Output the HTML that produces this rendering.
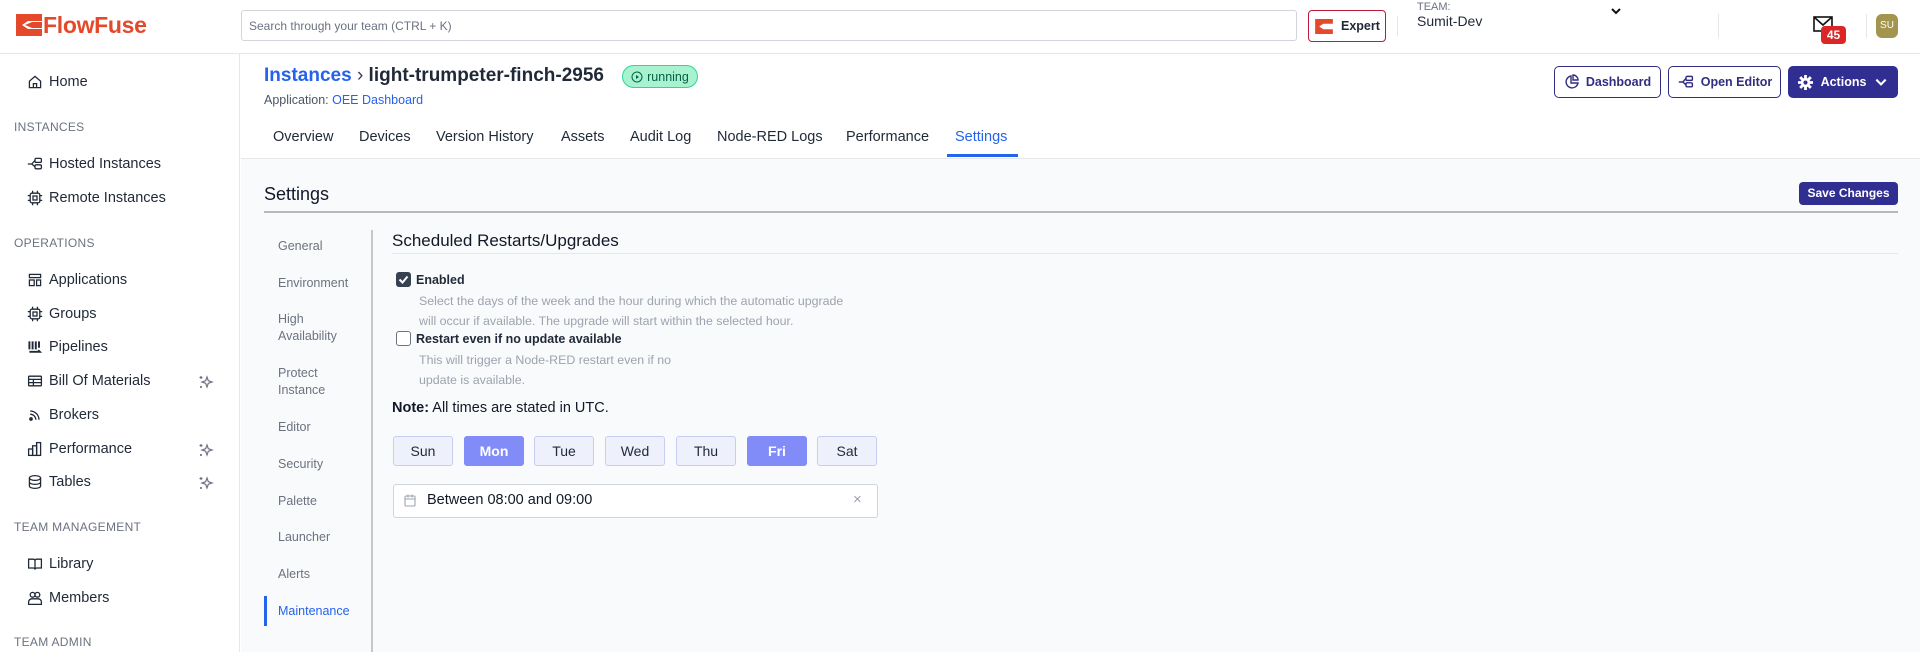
<!DOCTYPE html>
<html><head><meta charset="utf-8">
<style>
*{box-sizing:border-box;margin:0;padding:0}
body{width:1920px;height:652px;overflow:hidden;font-family:"Liberation Sans",sans-serif;background:#fff;color:#1f2937;position:relative}
.a{position:absolute;white-space:nowrap}
.hdr{position:absolute;left:0;top:0;width:1920px;height:54px;border-bottom:1px solid #e5e7eb;background:#fff}
.side{position:absolute;left:0;top:54px;width:240px;height:598px;border-right:1px solid #e5e7eb;background:#fff}
.si{position:absolute;left:27px;font-size:14.5px;color:#1f2937;display:flex;align-items:center}
.si svg{width:16px;height:16px;margin-right:6px;stroke:#1f2937;fill:none;stroke-width:1.6}
.sh{position:absolute;left:14px;font-size:12px;color:#6b7280;letter-spacing:.3px}
.spk{position:absolute;left:198px;width:16px;height:16px;stroke:#6b7280;fill:none;stroke-width:1.2}
.main{position:absolute;left:241px;top:158px;width:1679px;height:494px;background:#f9fafb;border-top:1px solid #e5e7eb}
.tab{position:absolute;top:129px;font-size:14.5px;color:#1f2937}
.btn{position:absolute;top:66px;height:32px;border:1.5px solid #312e81;border-radius:5px;font-size:12.5px;font-weight:bold;color:#312e81;display:flex;align-items:center;justify-content:center;gap:6px;background:#fff}
.nav{position:absolute;left:278px;font-size:12.5px;color:#6b7280;line-height:17px}
.day{position:absolute;top:436px;width:60px;height:30px;border:1px solid #c7cdf0;background:#eef0fc;border-radius:3px;font-size:14px;color:#1f2937;display:flex;align-items:center;justify-content:center}
.day.on{background:#818cf8;border-color:#818cf8;color:#fff;font-weight:bold}
.desc{position:absolute;left:419px;font-size:12.4px;color:#9ca3af;line-height:20px}
</style></head><body>
<div class="hdr"></div>
<svg class="a" style="left:16px;top:14px" width="26" height="22" viewBox="0 0 26 22"><path d="M0 0H26V7H12L6 11 12 15H26V22H0Z" fill="#e5492b"/><path d="M9 11 16 8H26V14H16Z" fill="#e5492b"/></svg>
<div class="a" style="left:43px;top:12px;font-size:23px;font-weight:bold;color:#e5492b;letter-spacing:-.3px">FlowFuse</div>
<div class="a" style="left:241px;top:10px;width:1056px;height:31px;border:1px solid #d1d5db;border-radius:3px;font-size:12px;color:#6b7280;padding:8px 7px">Search through your team (CTRL + K)</div>
<div class="a" style="left:1308px;top:10px;width:78px;height:32px;border:1.5px solid #b91c3c;border-radius:4px;display:flex;align-items:center;padding-left:6px;gap:8px;font-size:12.5px;font-weight:bold;color:#1f2937"><svg width="18" height="15" viewBox="0 0 26 22"><path d="M0 0H26V7H12L6 11 12 15H26V22H0Z" fill="#e5492b"/></svg>Expert</div>
<div class="a" style="left:1397px;top:16px;width:1px;height:20px;background:#e5e7eb"></div>
<div class="a" style="left:1417px;top:1px;font-size:11px;color:#6b7280">TEAM:</div>
<div class="a" style="left:1417px;top:13px;font-size:14px;color:#1f2937">Sumit-Dev</div>
<svg class="a" style="left:1610px;top:6px" width="12" height="10" viewBox="0 0 12 10"><path d="M2 3l4 4 4-4" stroke="#111" stroke-width="2" fill="none"/></svg>
<div class="a" style="left:1718px;top:14px;width:1px;height:24px;background:#e5e7eb"></div>
<svg class="a" style="left:1813px;top:16px" width="20" height="16" viewBox="0 0 20 16"><rect x="1" y="1" width="18" height="14" stroke="#111" stroke-width="1.6" fill="none"/><path d="M1 1l9 8 9-8" stroke="#111" stroke-width="1.6" fill="none"/></svg>
<div class="a" style="left:1821px;top:26px;width:25px;height:18px;background:#dc2626;border-radius:4px;color:#fff;font-size:12px;font-weight:bold;text-align:center;line-height:18px">45</div>
<div class="a" style="left:1866px;top:14px;width:1px;height:24px;background:#e5e7eb"></div>
<div class="a" style="left:1876px;top:14px;width:22px;height:24px;background:#a39550;border-radius:6px;color:#fff;font-size:10px;text-align:center;line-height:24px">SU</div>

<div class="side">
<div class="si" style="top:20px"><svg viewBox="0 0 20 20"><path d="M3 9l7-6 7 6v8H3z M8 17v-5h4v5"/></svg>Home</div>
<div class="sh" style="top:66px">INSTANCES</div>
<div class="si" style="top:102px"><svg viewBox="0 0 20 20"><rect x="10" y="3" width="8" height="5" rx="1.5"/><rect x="10" y="11" width="8" height="5" rx="1.5"/><path d="M1 10h5M6 10l4-4.5M6 10l4 3.5"/></svg>Hosted Instances</div>
<div class="si" style="top:136px"><svg viewBox="0 0 20 20"><rect x="4" y="4" width="12" height="12" rx="2"/><rect x="7.5" y="7.5" width="5" height="5"/><path d="M7 1v3M13 1v3M7 16v3M13 16v3M1 7h3M1 13h3M16 7h3M16 13h3"/></svg>Remote Instances</div>
<div class="sh" style="top:182px">OPERATIONS</div>
<div class="si" style="top:218px"><svg viewBox="0 0 20 20"><rect x="3" y="3" width="14" height="4"/><rect x="3" y="10" width="6" height="7"/><rect x="12" y="10" width="5" height="7"/></svg>Applications</div>
<div class="si" style="top:252px"><svg viewBox="0 0 20 20"><rect x="4" y="4" width="12" height="12" rx="2"/><rect x="7.5" y="7.5" width="5" height="5"/><path d="M7 1v3M13 1v3M7 16v3M13 16v3M1 7h3M1 13h3M16 7h3M16 13h3"/></svg>Groups</div>
<div class="si" style="top:285px"><svg viewBox="0 0 20 20" style="stroke-width:2.4"><path d="M3 3v10M7 3v10M11 3v10M15 3v8M3 16h13l-2-2"/></svg>Pipelines</div>
<div class="si" style="top:319px"><svg viewBox="0 0 20 20"><rect x="2" y="4" width="16" height="12" rx="1"/><path d="M2 8h16M2 12h16M8 8v8"/></svg>Bill Of Materials</div>
<div class="si" style="top:353px"><svg viewBox="0 0 20 20"><path d="M4 9a7 7 0 0 1 7 7M4 5a11 11 0 0 1 11 11"/><circle cx="5" cy="15" r="1.5" fill="#1f2937"/></svg>Brokers</div>
<div class="si" style="top:387px"><svg viewBox="0 0 20 20"><rect x="2" y="10" width="5" height="8"/><rect x="7" y="6" width="5" height="12"/><rect x="12" y="2" width="5" height="16"/></svg>Performance</div>
<div class="si" style="top:420px"><svg viewBox="0 0 20 20"><ellipse cx="10" cy="5" rx="7" ry="3"/><path d="M3 5v10c0 1.7 3 3 7 3s7-1.3 7-3V5M3 10c0 1.7 3 3 7 3s7-1.3 7-3"/></svg>Tables</div>
<svg class="spk" style="top:320px" viewBox="0 0 16 16"><path d="M9 3l1.3 3.7L14 8l-3.7 1.3L9 13l-1.3-3.7L4 8l3.7-1.3z M3 2v3M1.5 3.5h3M3 12v2M2 13h2"/></svg>
<svg class="spk" style="top:388px" viewBox="0 0 16 16"><path d="M9 3l1.3 3.7L14 8l-3.7 1.3L9 13l-1.3-3.7L4 8l3.7-1.3z M3 2v3M1.5 3.5h3M3 12v2M2 13h2"/></svg>
<svg class="spk" style="top:421px" viewBox="0 0 16 16"><path d="M9 3l1.3 3.7L14 8l-3.7 1.3L9 13l-1.3-3.7L4 8l3.7-1.3z M3 2v3M1.5 3.5h3M3 12v2M2 13h2"/></svg>
<div class="sh" style="top:466px">TEAM MANAGEMENT</div>
<div class="si" style="top:502px"><svg viewBox="0 0 20 20"><path d="M2 4h6a2 2 0 0 1 2 2v11a2 2 0 0 0-2-2H2zM18 4h-6a2 2 0 0 0-2 2v11a2 2 0 0 1 2-2h6z"/></svg>Library</div>
<div class="si" style="top:536px"><svg viewBox="0 0 20 20"><circle cx="7" cy="6" r="3"/><circle cx="13" cy="6" r="3"/><path d="M2 18v-3a4 4 0 0 1 4-4h8a4 4 0 0 1 4 4v3z"/></svg>Members</div>
<div class="sh" style="top:581px">TEAM ADMIN</div>
</div>

<div class="a" style="left:264px;top:65px;font-size:19px;font-weight:bold"><span style="color:#2563eb">Instances</span> <span style="color:#374151;font-weight:normal">›</span> light-trumpeter-finch-2956</div>
<div class="a" style="left:622px;top:65px;width:76px;height:23px;border:1.5px solid #34d399;background:#a7f3d0;border-radius:12px;font-size:12.5px;color:#065f46;display:flex;align-items:center;justify-content:center;gap:4px"><svg width="12" height="12" viewBox="0 0 12 12"><circle cx="6" cy="6" r="5" stroke="#065f46" fill="none"/><path d="M5 4l3 2-3 2z" fill="#065f46"/></svg>running</div>
<div class="a" style="left:264px;top:93px;font-size:12.5px;color:#4b5563">Application: <span style="color:#2563eb">OEE Dashboard</span></div>
<div class="tab" style="left:273px">Overview</div>
<div class="tab" style="left:359px">Devices</div>
<div class="tab" style="left:436px">Version History</div>
<div class="tab" style="left:561px">Assets</div>
<div class="tab" style="left:630px">Audit Log</div>
<div class="tab" style="left:717px">Node-RED Logs</div>
<div class="tab" style="left:846px">Performance</div>
<div class="tab" style="left:955px;color:#2563eb">Settings</div>
<div class="a" style="left:947px;top:154px;width:71px;height:3px;background:#2563eb"></div>
<div class="btn" style="left:1554px;width:107px"><svg width="16" height="16" viewBox="0 0 16 16" fill="none" stroke="#312e81" stroke-width="1.4"><path d="M7 2a6 6 0 1 0 7 7H7z"/><path d="M9 1v5h5a5 5 0 0 0-5-5z"/></svg>Dashboard</div>
<div class="btn" style="left:1668px;width:113px"><svg width="18" height="16" viewBox="0 0 20 20" fill="none" stroke="#312e81" stroke-width="1.8"><rect x="10" y="3" width="8" height="5" rx="1.5"/><rect x="10" y="11" width="8" height="5" rx="1.5"/><path d="M1 10h5M6 10l4-4.5M6 10l4 3.5"/></svg>Open Editor</div>
<div class="btn" style="left:1788px;width:110px;background:#312e91;border-color:#312e91;color:#fff;gap:8px"><svg width="15" height="15" viewBox="0 0 16 16"><circle cx="8" cy="8" r="5" fill="#fff"/><path d="M8 0v16M0 8h16M2.3 2.3l11.4 11.4M13.7 2.3L2.3 13.7" stroke="#fff" stroke-width="3"/><circle cx="8" cy="8" r="2.2" fill="#312e91"/></svg>Actions<svg width="14" height="12" viewBox="0 0 12 10"><path d="M2 3l4 4 4-4" stroke="#fff" stroke-width="1.8" fill="none"/></svg></div>

<div class="main"></div>
<div class="a" style="left:264px;top:184px;font-size:18px;color:#111827">Settings</div>
<div class="a" style="left:264px;top:211px;width:1634px;height:2px;background:#b6b9be"></div>
<div class="a" style="left:1799px;top:182px;width:99px;height:23px;background:#312e91;border-radius:4px;color:#fff;font-size:12px;font-weight:bold;text-align:center;line-height:23px">Save Changes</div>

<div class="a" style="left:371px;top:230px;width:1.5px;height:422px;background:#c4c7cc"></div>
<div class="nav" style="top:238px">General</div>
<div class="nav" style="top:275px">Environment</div>
<div class="nav" style="top:311px">High<br>Availability</div>
<div class="nav" style="top:365px">Protect<br>Instance</div>
<div class="nav" style="top:419px">Editor</div>
<div class="nav" style="top:456px">Security</div>
<div class="nav" style="top:493px">Palette</div>
<div class="nav" style="top:529px">Launcher</div>
<div class="nav" style="top:566px">Alerts</div>
<div class="nav" style="top:603px;color:#2563eb">Maintenance</div>
<div class="a" style="left:264px;top:596px;width:3px;height:30px;background:#2563eb"></div>

<div class="a" style="left:392px;top:231px;font-size:17px;color:#111827">Scheduled Restarts/Upgrades</div>
<div class="a" style="left:392px;top:253px;width:1506px;height:1px;background:#e5e7eb"></div>
<div class="a" style="left:396px;top:272px;width:15px;height:15px;background:#374151;border-radius:3px"><svg width="15" height="15" viewBox="0 0 15 15"><path d="M3.5 7.5l3 3 5-6" stroke="#fff" stroke-width="2" fill="none"/></svg></div>
<div class="a" style="left:416px;top:273px;font-size:12.5px;font-weight:bold;color:#1f2937">Enabled</div>
<div class="desc" style="top:291px">Select the days of the week and the hour during which the automatic upgrade<br>will occur if available. The upgrade will start within the selected hour.</div>
<div class="a" style="left:396px;top:331px;width:15px;height:15px;border:1.3px solid #6b7280;border-radius:3px;background:#fff"></div>
<div class="a" style="left:416px;top:332px;font-size:12.5px;font-weight:bold;color:#1f2937">Restart even if no update available</div>
<div class="desc" style="top:350px">This will trigger a Node-RED restart even if no<br>update is available.</div>
<div class="a" style="left:392px;top:400px;font-size:14.5px;color:#111827"><b>Note:</b> All times are stated in UTC.</div>
<div class="day" style="left:393px">Sun</div>
<div class="day on" style="left:464px">Mon</div>
<div class="day" style="left:534px">Tue</div>
<div class="day" style="left:605px">Wed</div>
<div class="day" style="left:676px">Thu</div>
<div class="day on" style="left:747px">Fri</div>
<div class="day" style="left:817px">Sat</div>
<div class="a" style="left:393px;top:484px;width:485px;height:34px;border:1px solid #d1d5db;border-radius:3px;background:#fff"></div>
<svg class="a" style="left:404px;top:494px" width="12" height="13" viewBox="0 0 12 13" fill="none" stroke="#9ca3af" stroke-width="1.1"><rect x="1" y="2" width="10" height="10" rx="1"/><path d="M1 5h10M4 0.5v3M8 0.5v3"/></svg>
<div class="a" style="left:427px;top:492px;font-size:14.5px;color:#111827">Between 08:00 and 09:00</div>
<div class="a" style="left:853px;top:491px;font-size:15px;color:#9ca3af">×</div>
</body></html>
